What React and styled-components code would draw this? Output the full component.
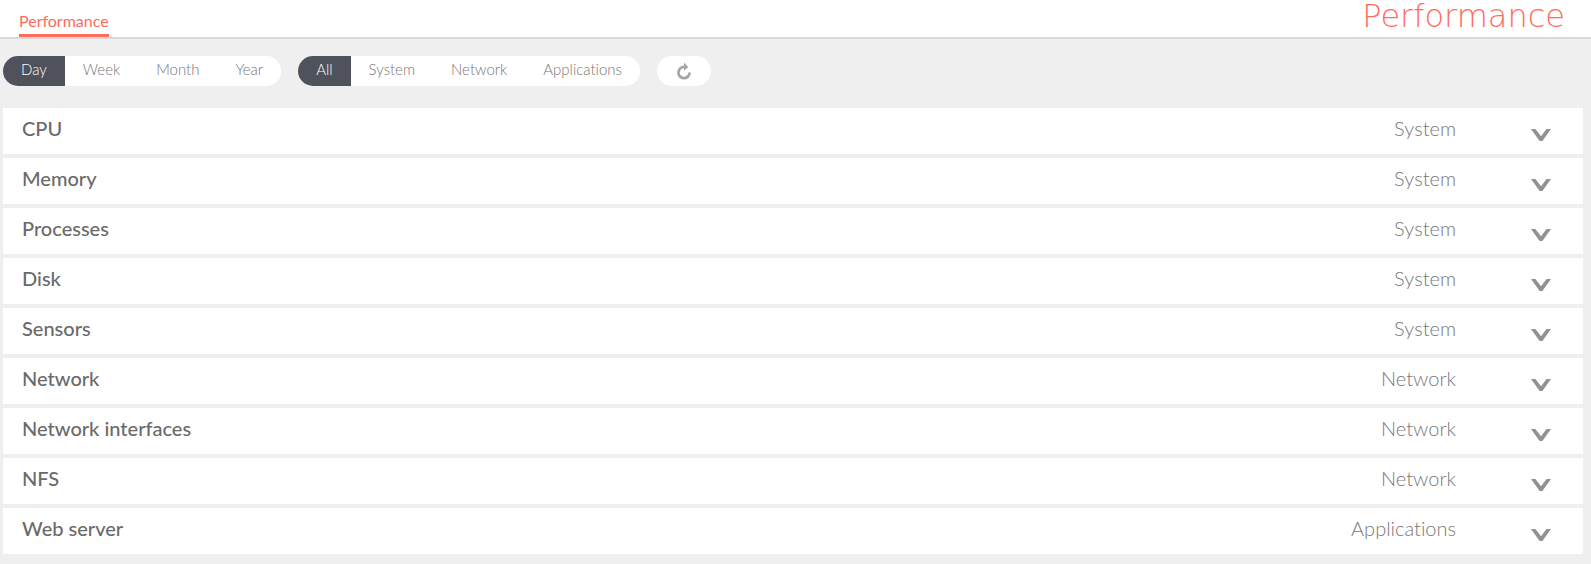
import React, { useState } from 'react'
import styled, { createGlobalStyle } from 'styled-components'

const periods = ['Day', 'Week', 'Month', 'Year']
const categories = ['All', 'System', 'Network', 'Applications']

const graphs = [
  { title: 'CPU', category: 'System' },
  { title: 'Memory', category: 'System' },
  { title: 'Processes', category: 'System' },
  { title: 'Disk', category: 'System' },
  { title: 'Sensors', category: 'System' },
  { title: 'Network', category: 'Network' },
  { title: 'Network interfaces', category: 'Network' },
  { title: 'NFS', category: 'Network' },
  { title: 'Web server', category: 'Applications' },
]

function Switcher({ label, options, value, onChange }) {
  return (
    <ButtonGroup role="group" aria-label={label}>
      {options.map((option) => (
        <GroupButton
          key={option}
          type="button"
          $active={option === value}
          aria-pressed={option === value}
          onClick={() => onChange(option)}
        >
          {option}
        </GroupButton>
      ))}
    </ButtonGroup>
  )
}

function App() {
  const [period, setPeriod] = useState('Day')
  const [category, setCategory] = useState('All')

  const visible = graphs.filter((g) => category === 'All' || g.category === category)

  return (
    <>
      <GlobalStyle />
      <Header>
        <nav>
          <Tab href="#performance">Performance</Tab>
        </nav>
        <PageTitle>Performance</PageTitle>
      </Header>
      <Toolbar>
        <Switcher label="Period" options={periods} value={period} onChange={setPeriod} />
        <Switcher label="Category" options={categories} value={category} onChange={setCategory} />
        <RefreshButton type="button" aria-label="Refresh">
          <svg width="16" height="18" viewBox="0 0 16 18" aria-hidden="true">
            <path d="M8.6 5A5.6 5.6 0 1 0 13.6 10.6" fill="none" stroke="#a6a6a6" strokeWidth="2.8" />
            <path d="M8 0.6L12.4 5.2L8 8.6Z" fill="#a6a6a6" />
          </svg>
        </RefreshButton>
      </Toolbar>
      <GraphList>
        {visible.map((graph) => (
          <li key={graph.title}>
            <GraphRow type="button">
              <GraphTitle>{graph.title}</GraphTitle>
              <GraphCategory>{graph.category}</GraphCategory>
              <Chevron width="20" height="12" viewBox="0 0 20 12" aria-hidden="true">
                <path d="M0 0H4.4L10 7.2L15.6 0H20L11.4 12H8.6Z" fill="#919191" />
              </Chevron>
            </GraphRow>
          </li>
        ))}
      </GraphList>
    </>
  )
}

const GlobalStyle = createGlobalStyle`
  * {
    box-sizing: border-box;
  }
  body {
    margin: 0;
    background: #efefef;
    font-family: Lato, "Open Sans", sans-serif;
    font-variant-ligatures: none;
  }
  button {
    border: 0;
    font-family: inherit;
    font-variant-ligatures: none;
    cursor: pointer;
  }
`

const Header = styled.header`
  display: flex;
  justify-content: space-between;
  height: 39px;
  padding: 0 26px 0 19px;
  background: #fff;
  border-bottom: 2px solid #d9d9d9;
`

const Tab = styled.a`
  display: block;
  height: 37px;
  padding-top: 11px;
  border-bottom: 3px solid #ff6c5c;
  color: #ff6c5c;
  font-size: 16px;
  line-height: 20px;
  text-decoration: none;
`

const PageTitle = styled.h1`
  margin: 0;
  color: #ff6c5c;
  font-family: "DejaVu Sans Light", "DejaVu Sans", sans-serif;
  font-size: 32px;
  font-weight: 200;
  line-height: 32px;
`

const Toolbar = styled.div`
  display: flex;
  gap: 17px;
  padding: 17px 3px 22px;
`

const ButtonGroup = styled.div`
  display: flex;
  overflow: hidden;
  border-radius: 15px;
  background: #fff;
`

const GroupButton = styled.button`
  height: 30px;
  padding: 0 18px 4px;
  background: ${(props) => (props.$active ? '#4f525a' : '#fff')};
  color: ${(props) => (props.$active ? '#fff' : '#777')};
  font-size: 15px;
  font-weight: 300;
  line-height: 26px;
`

const RefreshButton = styled.button`
  display: flex;
  align-items: center;
  justify-content: center;
  width: 54px;
  height: 30px;
  padding: 0;
  border-radius: 15px;
  background: #fff;
`

const GraphList = styled.ul`
  display: flex;
  flex-direction: column;
  gap: 4px;
  margin: 0;
  padding: 0 8px 10px 3px;
  list-style: none;
`

const GraphRow = styled.button`
  display: flex;
  align-items: center;
  width: 100%;
  height: 46px;
  padding: 0 32px 6px 19px;
  background: #fff;
  font-size: 20px;
  line-height: 24px;
  text-align: left;
`

const GraphTitle = styled.span`
  flex: 1;
  color: #6a6a6a;
  font-weight: 500;
`

const GraphCategory = styled.span`
  color: #787878;
  font-weight: 300;
`

const Chevron = styled.svg`
  margin: 14px 0 0 75px;
`

export default App
